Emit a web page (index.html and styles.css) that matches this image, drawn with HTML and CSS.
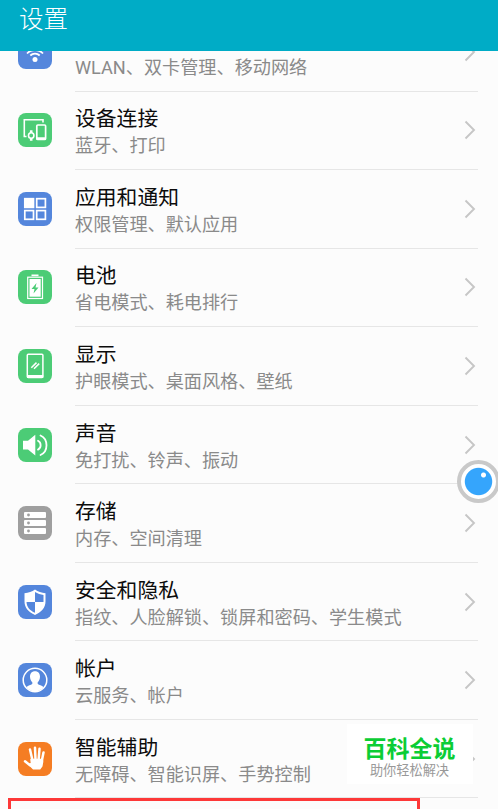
FILE: index.html
```html
<!DOCTYPE html>
<html lang="zh-CN">
<head>
  <meta charset="utf-8" />
  <title>设置</title>
  <meta name="viewport" content="width=device-width, initial-scale=1" />
  <link rel="stylesheet" href="styles.css">
</head>
<body>
  <div class="screen">
    <header class="header"><h1>设置</h1></header>
    <ul class="list">
      <li class="row">
        <svg class="icon blue" viewBox="0 0 34 34" fill="none" stroke="#fff" stroke-width="1.8">
          <path d="M7 15a14 14 0 0 1 20 0M9 18.500a11 11 0 0 1 16 0M12.300 20.500a6.800 6.800 0 0 1 9.400 0" />
          <circle cx="17" cy="24.500" r="2.500" fill="#fff" stroke="none" />
        </svg>
        <div class="info">
          <div class="text"><h2>无线和网络</h2><p>WLAN、双卡管理、移动网络</p></div>
          <svg class="arrow" viewBox="0 0 12 20"><path d="M1.500 1.500 10 10l-8.500 8.500" /></svg>
        </div>
      </li>
      <li class="row">
        <svg class="icon green" viewBox="0 0 34 34" fill="none" stroke="#fff" stroke-width="1.6">
          <path d="M8.500 23.500H6.300V6.800H25V9.500" />
          <rect x="18.800" y="12" width="8.800" height="14.500" rx="1" stroke-width="1.700" />
          <path d="M18.500 25.500h9.500" stroke-width="2.400" />
          <circle cx="13.200" cy="22.500" r="2.700" />
          <path d="M13.200 17.300v2.500M13.200 25v2.800" stroke-width="2.600" />
        </svg>
        <div class="info">
          <div class="text"><h2>设备连接</h2><p>蓝牙、打印</p></div>
          <svg class="arrow" viewBox="0 0 12 20"><path d="M1.500 1.500 10 10l-8.500 8.500" /></svg>
        </div>
      </li>
      <li class="row">
        <svg class="icon blue" viewBox="0 0 34 34" fill="none" stroke="#fff" stroke-width="1.7">
          <rect x="6.800" y="6.700" width="8.700" height="8.700" fill="#fff" />
          <rect x="18.700" y="6.700" width="8.700" height="8.700" />
          <rect x="6.800" y="18.600" width="8.700" height="8.700" />
          <rect x="18.700" y="18.600" width="8.700" height="8.700" />
        </svg>
        <div class="info">
          <div class="text"><h2>应用和通知</h2><p>权限管理、默认应用</p></div>
          <svg class="arrow" viewBox="0 0 12 20"><path d="M1.500 1.500 10 10l-8.500 8.500" /></svg>
        </div>
      </li>
      <li class="row">
        <svg class="icon green" viewBox="0 0 34 34">
          <rect x="13.500" y="4.500" width="7" height="1.700" fill="#fff" />
          <rect x="9.700" y="7.200" width="14.800" height="21.300" fill="none" stroke="#fff" stroke-width="1.200" />
          <rect x="11.500" y="9" width="11.200" height="17.700" fill="#fff" />
          <path class="cut" d="M18.500 13l-5 6h3l-1 4.500 5-6h-3z" />
        </svg>
        <div class="info">
          <div class="text"><h2>电池</h2><p>省电模式、耗电排行</p></div>
          <svg class="arrow" viewBox="0 0 12 20"><path d="M1.500 1.500 10 10l-8.500 8.500" /></svg>
        </div>
      </li>
      <li class="row">
        <svg class="icon green" viewBox="0 0 34 34" fill="none" stroke="#fff" stroke-width="1.500">
          <rect x="9.300" y="5.200" width="15.600" height="23.300" rx="1" />
          <path d="M9 27.500h16.200" stroke-width="3" />
          <path d="M13.300 18.800l5.200-5.200M16 19.800l5.200-5.200" />
        </svg>
        <div class="info">
          <div class="text"><h2>显示</h2><p>护眼模式、桌面风格、壁纸</p></div>
          <svg class="arrow" viewBox="0 0 12 20"><path d="M1.500 1.500 10 10l-8.500 8.500" /></svg>
        </div>
      </li>
      <li class="row">
        <svg class="icon green" viewBox="0 0 34 34" fill="none" stroke="#fff" stroke-width="1.800" stroke-linecap="round">
          <path d="M5 12.800h5l7.300-6v20.800l-7.300-6H5z" fill="#fff" stroke="none" />
          <path d="M20 12.800c3.500 1.800 3.500 7 0 8.800M22.500 7.500c8 3.500 8 16 0 19.500" />
        </svg>
        <div class="info">
          <div class="text"><h2>声音</h2><p>免打扰、铃声、振动</p></div>
          <svg class="arrow" viewBox="0 0 12 20"><path d="M1.500 1.500 10 10l-8.500 8.500" /></svg>
        </div>
      </li>
      <li class="row">
        <svg class="icon gray" viewBox="0 0 34 34" fill="#fff">
          <rect x="6" y="6" width="22" height="6" rx="1" />
          <rect x="6" y="14" width="22" height="6" rx="1" />
          <rect x="6" y="22" width="22" height="6" rx="1" />
          <g class="cut"><circle cx="10.500" cy="9" r="1.400" /><circle cx="10.500" cy="17" r="1.400" /><circle cx="10.500" cy="25" r="1.400" /></g>
        </svg>
        <div class="info">
          <div class="text"><h2>存储</h2><p>内存、空间清理</p></div>
          <svg class="arrow" viewBox="0 0 12 20"><path d="M1.500 1.500 10 10l-8.500 8.500" /></svg>
        </div>
      </li>
      <li class="row">
        <svg class="icon blue" viewBox="0 0 34 34">
          <path d="M17 4.500c3 2.200 6.500 3.300 10.500 3.700v8.300c0 6-4 10.700-10.500 13.500C10.500 27.200 6.500 22.500 6.500 16.500V8.200C10.500 7.800 14 6.700 17 4.500z" fill="#fff" />
          <path class="cut" d="M8.500 17H17v10.800C11.800 25.500 8.700 22 8.500 17zM17 7c2.600 1.600 5.500 2.500 8.500 2.900V17H17z" />
        </svg>
        <div class="info">
          <div class="text"><h2>安全和隐私</h2><p>指纹、人脸解锁、锁屏和密码、学生模式</p></div>
          <svg class="arrow" viewBox="0 0 12 20"><path d="M1.500 1.500 10 10l-8.500 8.500" /></svg>
        </div>
      </li>
      <li class="row">
        <svg class="icon blue" viewBox="0 0 34 34">
          <circle cx="17" cy="17" r="11.800" fill="none" stroke="#fff" stroke-width="1.500" />
          <path d="M17 8.300c3.200 0 5 2.200 5 5.300 0 2.400-.9 4.500-2.300 5.700v1.800c1.600 1.200 4 1.400 5.800 2.900-2 2.800-5 4.500-8.500 4.500s-6.500-1.700-8.500-4.500c1.800-1.500 4.200-1.700 5.800-2.900v-1.800c-1.400-1.200-2.300-3.300-2.300-5.700 0-3.100 1.800-5.300 5-5.300z" fill="#fff" />
        </svg>
        <div class="info">
          <div class="text"><h2>帐户</h2><p>云服务、帐户</p></div>
          <svg class="arrow" viewBox="0 0 12 20"><path d="M1.500 1.500 10 10l-8.500 8.500" /></svg>
        </div>
      </li>
      <li class="row">
        <svg class="icon orange" viewBox="0 0 34 34" fill="none" stroke="#fff" stroke-width="2.500" stroke-linecap="round" stroke-linejoin="round">
          <path d="M12 7.500l2.500 11M17 5.800l.5 12M21.500 6.800l-1 12M25.500 10.500l-2 10M7 19.300l5 4" />
          <path d="M13 17.500h11.300l.3 2-.8 4.500-2 2.800h-6.500L11 22.500l2.500-1z" fill="#fff" stroke-width="1.500" />
        </svg>
        <div class="info">
          <div class="text"><h2>智能辅助</h2><p>无障碍、智能识屏、手势控制</p></div>
          <svg class="arrow" viewBox="0 0 12 20"><path d="M1.500 1.500 10 10l-8.500 8.500" /></svg>
        </div>
      </li>
    </ul>
    <div class="float-ball"></div>
    <div class="watermark">
      <strong>百科全说</strong>
      <span>助你轻松解决</span>
    </div>
    <div class="highlight"></div>
  </div>
</body>
</html>
```

FILE: styles.css
```css
* {
  box-sizing: border-box;
  margin: 0;
  padding: 0;
}
body {
  font-family: Roboto, "Noto Sans CJK SC", sans-serif;
  background-color: #fcfcfc;
}
.screen {
  position: relative;
  height: 809px;
  overflow: hidden;
}
.header {
  position: relative;
  z-index: 1;
  height: 51px;
  padding: 1px 0 0 19px;
  background-color: #00acc6;
}
h1 {
  font-size: 24.5px;
  line-height: 37px;
  font-weight: 300;
  color: #fff;
}
/* first row is scrolled halfway under the header */
.list {
  list-style: none;
  margin-top: -38px;
}
.row {
  display: flex;
  align-items: center;
  height: 78.55px;
  padding: 0 20px 0 18px;
}
.icon {
  width: 34px;
  height: 34px;
  margin: 0 23px 1px 0;
  border-radius: 8px;
}
.blue {
  background-color: #5486dc;
}
.green {
  background-color: #4ccc76;
}
.gray {
  background-color: #9f9f9f;
}
.orange {
  background-color: #f57d23;
}
.cut {
  fill: #5486dc;
}
.green .cut {
  fill: #4ccc76;
}
.gray .cut {
  fill: #9f9f9f;
}
.info {
  flex: 1;
  display: flex;
  align-items: center;
  justify-content: space-between;
  height: 100%;
  border-bottom: 1px solid #e6e6e6;
}
.text {
  padding-top: 5px;
}
h2 {
  font-size: 20.8px;
  line-height: 27px;
  font-weight: 400;
  color: #0c0c0c;
}
p {
  font-size: 18.15px;
  line-height: 26px;
  font-weight: 400;
  color: #8a8a8a;
}
.arrow {
  width: 12px;
  height: 20px;
  margin-right: 2px;
  fill: none;
  stroke: #c6c6c6;
  stroke-width: 1.9;
}
.float-ball {
  position: absolute;
  top: 460px;
  left: 457px;
  width: 43px;
  height: 43px;
  border: 4px solid #c9c9c9;
  border-radius: 50%;
  background: radial-gradient(circle at 22.500px 11px, #fff 2px, transparent 3px),
    radial-gradient(circle, #35a5fc 13.200px, #fff 14.200px);
}
.watermark {
  position: absolute;
  top: 724px;
  left: 347px;
  width: 126px;
  height: 60px;
  padding: 10px 1px 0 0;
  background-color: #fff;
  text-align: center;
}
.watermark strong {
  display: block;
  font-size: 23px;
  line-height: 32px;
  color: #0bcd35;
}
.watermark span {
  display: block;
  font-size: 13.2px;
  line-height: 10px;
  color: #999;
}
.highlight {
  position: absolute;
  top: 798px;
  left: 8px;
  width: 412px;
  height: 40px;
  border: 3px solid #fd3838;
}
```
